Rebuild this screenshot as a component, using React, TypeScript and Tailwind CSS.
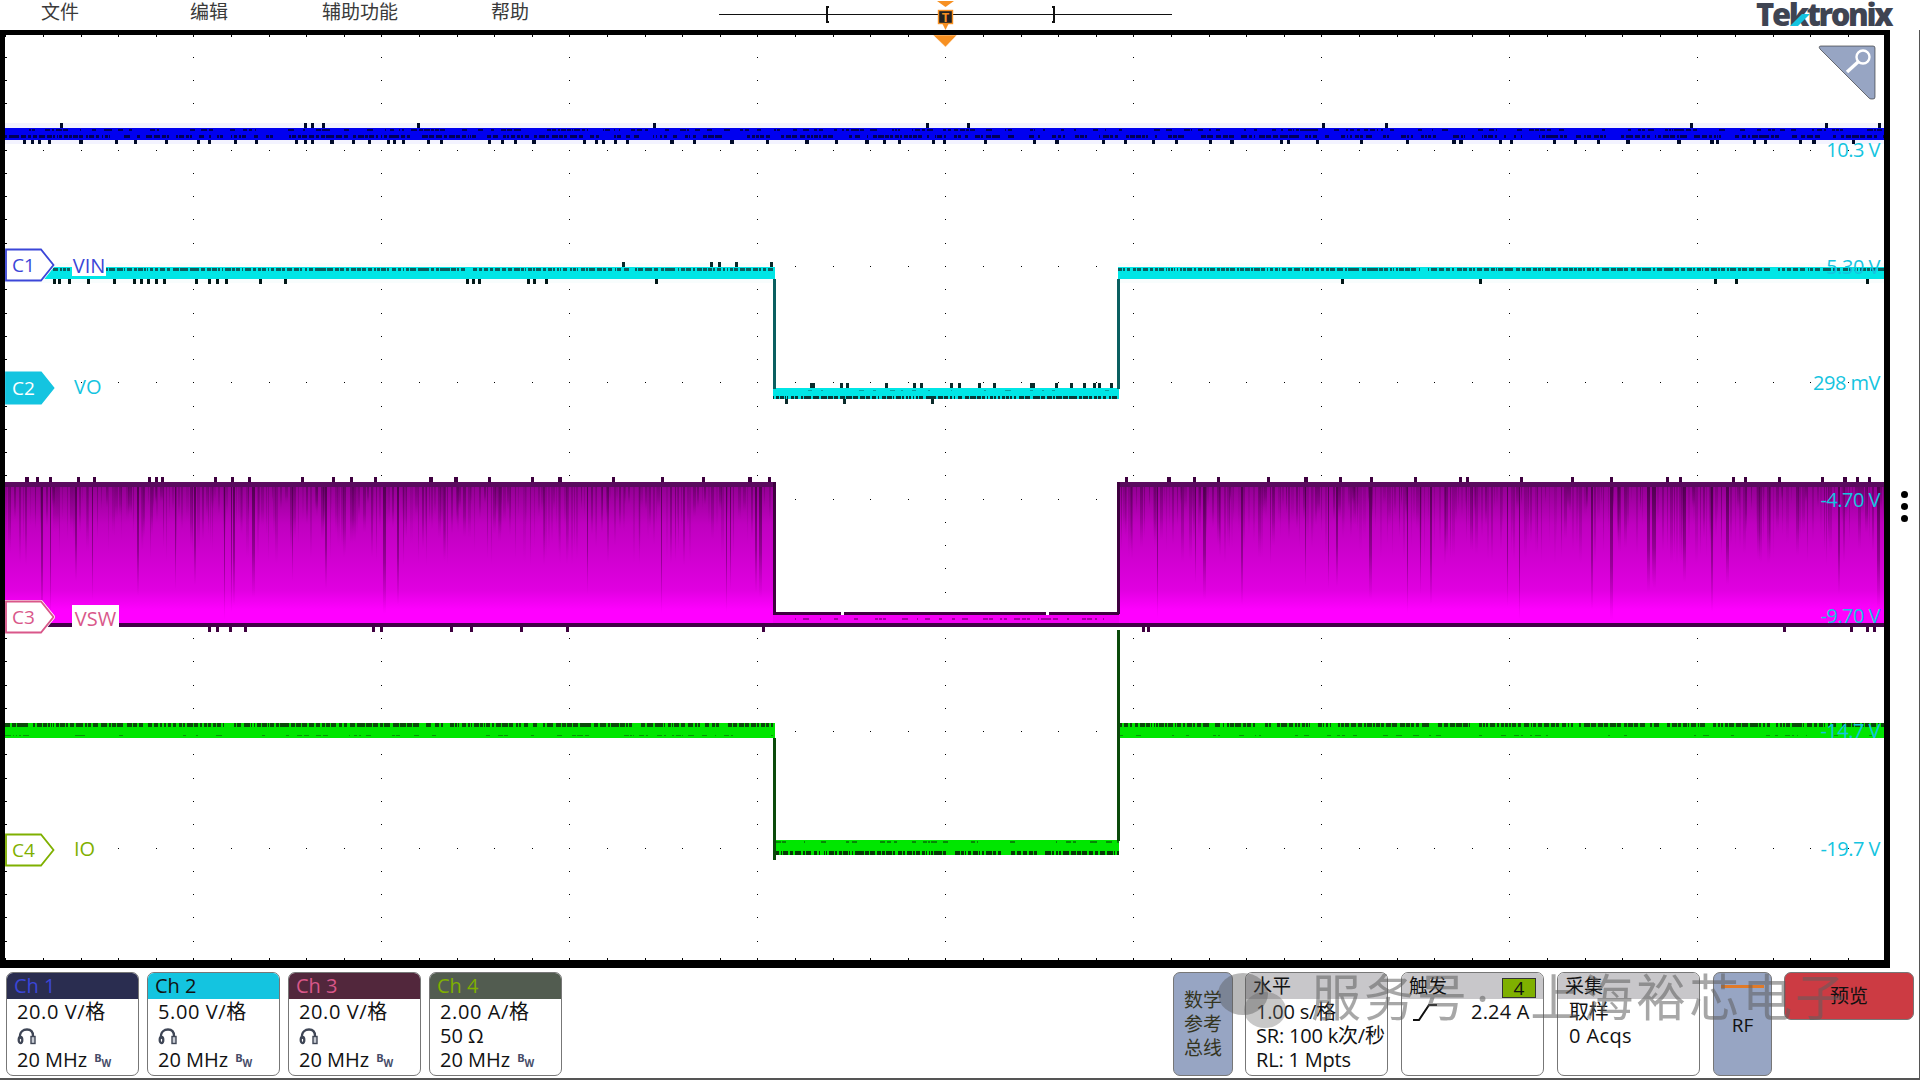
import React from "react";

function rng(seed: number) {
  let a = seed;
  return () => {
    a |= 0;
    a = (a + 0x6d2b79f5) | 0;
    let t = Math.imul(a ^ (a >>> 15), 1 | a);
    t = (t + Math.imul(t ^ (t >>> 7), 61 | t)) ^ t;
    return ((t ^ (t >>> 14)) >>> 0) / 4294967296;
  };
}

type R = { x: number; y: number; w: number; h: number };

function ticks(seed: number, x0: number, x1: number, y: number, h: number, pitch: number): R[] {
  const r = rng(seed);
  const out: R[] = [];
  let x = x0 + r() * pitch;
  while (x < x1) {
    out.push({ x: Math.round(x), y, w: r() > 0.8 ? 4 : 3, h });
    x += pitch * (0.2 + r() * 1.8);
  }
  return out;
}

function at(xs: number[], y: number, h: number, w = 3): R[] {
  return xs.map((x) => ({ x, y, w, h }));
}

function dashes(seed: number, x0: number, x1: number, y: number, h: number, fill: number): R[] {
  const r = rng(seed);
  const out: R[] = [];
  let x = x0;
  while (x < x1) {
    const w = 1 + r() * 5;
    if (r() < fill) out.push({ x: Math.round(x), y, w: Math.min(Math.round(w), x1 - Math.round(x)), h });
    x += w + 0.5 + r() * 2;
  }
  return out;
}

function Rs({ items, fill, opacity }: { items: R[]; fill: string; opacity?: number }) {
  return (
    <g fill={fill} opacity={opacity} shapeRendering="crispEdges">
      {items.map((d, i) => (
        <rect key={i} x={d.x} y={d.y} width={d.w} height={d.h} />
      ))}
    </g>
  );
}

function Grid() {
  const out: R[] = [];
  for (let i = 0; i <= 10; i++) {
    const x = Math.round(5.3 + 188 * i);
    for (let k = 0; k <= 40; k++) out.push({ x, y: Math.round(33.4 + 23.26 * k), w: 1, h: 1 });
  }
  for (let j = 0; j <= 8; j++) {
    const y = Math.round(33.4 + 116.3 * j);
    for (let k = 0; k <= 50; k++) out.push({ x: Math.round(5.3 + 37.6 * k), y, w: 1, h: 1 });
  }
  for (let k = 0; k <= 50; k++) {
    out.push({ x: Math.round(5.3 + 37.6 * k), y: 35, w: 1, h: 2 });
    out.push({ x: Math.round(5.3 + 37.6 * k), y: 958, w: 1, h: 2 });
  }
  for (let k = 0; k <= 40; k++) out.push({ x: 5, y: Math.round(33.4 + 23.26 * k), w: 2, h: 1 });
  return <Rs items={out} fill="#000" />;
}

function Streaks({ x0, x1, seed }: { x0: number; x1: number; seed: number }) {
  const r = rng(seed);
  const out: { x: number; w: number; h: number; o: number }[] = [];
  for (let x = x0; x < x1; x += 1 + Math.floor(r() * 5)) {
    const big = r() > 0.9;
    out.push({
      x,
      w: r() > 0.6 ? 2 : r() > 0.6 ? 3 : 1,
      h: big ? 95 + r() * 40 : 15 + r() * 65,
      o: big ? 0.9 : 0.15 + r() * 0.45,
    });
  }
  return (
    <g shapeRendering="crispEdges">
      {out.map((s, i) => (
        <rect key={i} x={s.x} y={486} width={s.w} height={s.h} fill="url(#streak)" opacity={s.o} />
      ))}
    </g>
  );
}

function Traces() {
  const teal = "#0b5f60";
  const dark = "#000a2a";
  const darkG = "#0a4a0a";
  const pur = "#3f0040";
  const ci = "#021818";
  return (
    <svg className="absolute inset-0 block" width={1879} height={925} viewBox="5 35 1879 925">
      <defs>
        <linearGradient id="mag" x1="0" y1="0" x2="0" y2="1">
          <stop offset="0" stopColor="#8e008e" />
          <stop offset="0.3" stopColor="#c000c0" />
          <stop offset="0.75" stopColor="#e000e0" />
          <stop offset="0.9" stopColor="#ff00ff" />
          <stop offset="1" stopColor="#ff00ff" />
        </linearGradient>
        <linearGradient id="streak" x1="0" y1="0" x2="0" y2="1">
          <stop offset="0" stopColor="#3a003a" stopOpacity="0.85" />
          <stop offset="0.6" stopColor="#500050" stopOpacity="0.5" />
          <stop offset="1" stopColor="#800080" stopOpacity="0" />
        </linearGradient>
      </defs>

      <Grid />

      {/* Channel 1: blue */}
      <rect x={5} y={123} width={1879} height={21} fill="#f3f3ff" />
      <rect x={5} y={128} width={1879} height={12} fill="#0000f0" shapeRendering="crispEdges" />
      <Rs items={dashes(11, 5, 1884, 129, 2, 0.45)} fill="#000060" />
      <Rs items={dashes(12, 5, 1884, 135, 3, 0.7)} fill="#00005a" />
      <Rs items={at([60, 304, 311, 322, 417, 653, 926, 967, 1322, 1385, 1690, 1825, 1878], 123, 5)} fill={dark} />
      <Rs items={ticks(13, 8, 1884, 140, 4, 26)} fill={dark} />

      {/* Channel 2: cyan */}
      <rect x={5} y={263} width={768} height={20} fill="#f8fdfd" />
      <rect x={1118} y={263} width={766} height={20} fill="#f8fdfd" />
      <rect x={5} y={267} width={770} height={12} fill="#00e6e6" shapeRendering="crispEdges" />
      <rect x={1118} y={267} width={766} height={12} fill="#00e6e6" shapeRendering="crispEdges" />
      <rect x={773} y={388} width={346} height={11} fill="#00e6e6" shapeRendering="crispEdges" />
      <Rs items={dashes(21, 5, 773, 268, 3, 0.97)} fill={teal} />
      <Rs items={dashes(22, 1118, 1884, 268, 3, 0.97)} fill={teal} />
      <Rs items={dashes(23, 773, 1119, 396, 3, 1)} fill="#063a3a" />
      <Rs items={dashes(24, 773, 1119, 390, 1, 0.3)} fill={teal} opacity={0.5} />
      <rect x={773} y={279} width={3} height={110} fill={teal} shapeRendering="crispEdges" />
      <rect x={1117} y={279} width={3} height={110} fill={teal} shapeRendering="crispEdges" />
      <Rs items={at([622, 710, 718, 735, 770], 262, 5)} fill="#0a2a2a" />
      <Rs
        items={at([53, 58, 68, 87, 113, 133, 140, 147, 155, 163, 195, 208, 216, 225, 259, 284, 466, 472, 478, 527, 533, 545, 655, 1341, 1479, 1714, 1735, 1866], 279, 5)}
        fill={ci}
      />
      <Rs items={at([810, 812, 840, 846, 885, 913, 920, 950, 958, 978, 993, 1030, 1032, 1055, 1070, 1083, 1093, 1098, 1110], 383, 5)} fill="#0a2a2a" />
      <Rs items={at([785, 843, 931], 399, 5)} fill="#0a2a2a" />

      {/* Channel 3: magenta */}
      <rect x={5} y={482} width={770} height={143} fill="url(#mag)" shapeRendering="crispEdges" />
      <rect x={1118} y={482} width={766} height={143} fill="url(#mag)" shapeRendering="crispEdges" />
      <Streaks x0={5} x1={775} seed={31} />
      <Streaks x0={1118} x1={1884} seed={32} />
      <rect x={5} y={482} width={770} height={5} fill="#5a0a5e" shapeRendering="crispEdges" />
      <rect x={1118} y={482} width={766} height={5} fill="#5a0a5e" shapeRendering="crispEdges" />
      <rect x={773} y={613} width={346} height={12} fill="#f400f4" shapeRendering="crispEdges" />
      <rect x={773} y={482} width={3} height={132} fill={pur} shapeRendering="crispEdges" />
      <rect x={1117} y={482} width={3} height={132} fill={pur} shapeRendering="crispEdges" />
      <rect x={773} y={612} width={346} height={3} fill={pur} shapeRendering="crispEdges" />
      <rect x={841} y={612} width={3} height={3} fill="#fff" shapeRendering="crispEdges" />
      <rect x={1046} y={612} width={3} height={3} fill="#fff" shapeRendering="crispEdges" />
      <Rs items={dashes(33, 790, 1110, 618, 2, 0.5)} fill="#a000a0" />
      <rect x={5} y={623} width={1879} height={4} fill="#420048" shapeRendering="crispEdges" />
      <Rs items={ticks(34, 8, 770, 477, 5, 28)} fill={pur} />
      <Rs items={ticks(35, 1125, 1884, 477, 5, 28)} fill={pur} />
      <Rs items={at([208, 216, 229, 244, 372, 380, 450, 470, 520, 566, 762], 627, 5)} fill={pur} />
      <Rs items={at([1142, 1147, 1783, 1850, 1866, 1873], 627, 5)} fill={pur} />

      {/* Channel 4: green */}
      <rect x={5} y={723} width={770} height={15} fill="#00e600" shapeRendering="crispEdges" />
      <rect x={1118} y={723} width={766} height={15} fill="#00e600" shapeRendering="crispEdges" />
      <rect x={773} y={840} width={346} height={15} fill="#00e600" shapeRendering="crispEdges" />
      <Rs items={dashes(41, 5, 773, 723, 4, 0.9)} fill={darkG} />
      <Rs items={dashes(42, 1118, 1884, 723, 4, 0.9)} fill={darkG} />
      <Rs items={dashes(43, 5, 773, 735, 1, 0.3)} fill={darkG} opacity={0.5} />
      <Rs items={dashes(44, 1118, 1884, 735, 1, 0.3)} fill={darkG} opacity={0.5} />
      <Rs items={dashes(45, 773, 1119, 851, 4, 0.92)} fill="#063a06" />
      <Rs items={dashes(46, 773, 1119, 841, 2, 0.4)} fill={darkG} opacity={0.6} />
      <rect x={773} y={738} width={3} height={122} fill={darkG} shapeRendering="crispEdges" />
      <rect x={1117} y={630} width={3} height={211} fill={darkG} shapeRendering="crispEdges" />

      {/* Trigger position */}
      <polygon points="933,35 957,35 945.5,47" fill="#f79022" stroke="#fff" strokeWidth={0.5} />

      {/* Zoom corner */}
      <path d="M1821 46 H1873 Q1875 46 1875 48 V97 Q1875 99 1873 99 H1871 Q1870 99 1869 98 L1820 49 Q1818 46 1821 46 Z" fill="#97a5c3" stroke="#222" strokeWidth={0.6} />
      <circle cx={1863} cy={57} r={6.5} fill="none" stroke="#fff" strokeWidth={2.4} />
      <path d="M1858 62 L1847 72" stroke="#fff" strokeWidth={3.4} />
    </svg>
  );
}

function Badge({
  cls,
  label,
  fill,
  stroke,
  text,
}: {
  cls: string;
  label: string;
  fill: string;
  stroke: string;
  text: string;
}) {
  return (
    <div className={"absolute w-[50px] h-[34px] flex items-center " + cls}>
      <svg className="absolute inset-0" width={50} height={34} viewBox="0 0 50 34">
        <polygon points="1,1.5 36,1.5 48.5,17 36,32.5 1,32.5" fill={fill} stroke="#fff" strokeWidth={3.5} strokeLinejoin="round" />
        <polygon points="1,1.5 36,1.5 48.5,17 36,32.5 1,32.5" fill={fill} stroke={stroke} strokeWidth={1.8} />
      </svg>
      <span className="relative ml-[7px] text-[19px] leading-none" style={{ color: text }}>
        {label}
      </span>
    </div>
  );
}

function Readout({ cls, children }: { cls: string; children: React.ReactNode }) {
  return (
    <div className={"absolute right-[4px] text-[20px] leading-[24px] tracking-[-0.5px] text-[#14c4e0] " + cls}>{children}</div>
  );
}

function Probe() {
  return (
    <svg width={21} height={17} viewBox="0 0 21 17" fill="none" stroke="#3f4656" strokeWidth={2.3}>
      <path d="M3 11 C2 3 7 1.5 10 1.5 C14 1.5 16 4 16 8" />
      <ellipse cx={3.5} cy={12} rx={1.8} ry={3} />
      <rect x={14} y={8.5} width={4} height={7} fill="#c8ccd4" strokeWidth={1.4} />
    </svg>
  );
}

function Bw() {
  return (
    <span className="ml-[7px] inline-flex items-start font-bold text-[#454c68] leading-none">
      <span className="text-[11px]">B</span>
      <span className="text-[10px] mt-[6px]">W</span>
    </span>
  );
}

function ChannelPanel({
  title,
  head,
  headText,
  v,
  second,
}: {
  title: string;
  head: string;
  headText: string;
  v: string;
  second: React.ReactNode;
}) {
  return (
    <div className="w-[133px] h-[104px] rounded-[7px] border border-[#777777] bg-white overflow-hidden flex flex-col shrink-0">
      <div className="h-[26px] pl-[7px] flex items-center text-[20px] leading-none" style={{ background: head, color: headText }}>
        {title}
      </div>
      <div className="h-[24px] mt-px pl-[10px] flex items-center text-[20px] tracking-[0.6px] text-[#111]">{v}</div>
      <div className="h-[24px] pl-[10px] flex items-center text-[20px] text-[#111]">{second}</div>
      <div className="h-[24px] pl-[10px] flex items-center text-[20px] text-[#111]">
        20 MHz
        <Bw />
      </div>
    </div>
  );
}

function InfoPanel({
  cls,
  title,
  badge,
  rows,
}: {
  cls?: string;
  title: string;
  badge?: string;
  rows: React.ReactNode[];
}) {
  return (
    <div className={"w-[143px] h-[104px] rounded-[7px] border border-[#777777] bg-white overflow-hidden flex flex-col shrink-0 " + (cls ?? "")}>
      <div className="h-[26px] pl-[7px] pr-[7px] flex items-center justify-between bg-[#c8c7ca] text-[19px] leading-none text-[#111]">
        <span>{title}</span>
        {badge && (
          <span className="w-[34px] h-[20px] mt-[4px] border border-[#333] bg-[#7fb000] flex items-center justify-center text-[19px]">
            {badge}
          </span>
        )}
      </div>
      <div className="pt-px flex flex-col">
        {rows.map((r, i) => (
          <div key={i} className="h-[24px] pl-[10px] flex items-center text-[20px] tracking-[-0.2px] text-[#111] whitespace-nowrap">
            {r}
          </div>
        ))}
      </div>
    </div>
  );
}

export default function App() {
  return (
    <div className="relative w-[1920px] h-[1080px] overflow-hidden bg-white flex flex-col font-['Open_Sans','Noto_Sans_CJK_SC',sans-serif]">
      {/* Top bar */}
      <div className="h-[30px] flex items-center shrink-0 relative text-[19px] leading-none text-[#3a3a3a]">
        <span className="ml-[41px] mb-[5px]">文件</span>
        <span className="ml-[111px] mb-[5px]">编辑</span>
        <span className="ml-[94px] mb-[5px]">辅助功能</span>
        <span className="ml-[93px] mb-[5px]">帮助</span>
        <svg className="ml-[190px] shrink-0" width={453} height={30} viewBox="719 0 453 30">
          <path d="M719 14.5 H1172" stroke="#111" strokeWidth={1} shapeRendering="crispEdges" />
          <path d="M829 7 H827 V22 H829 M1052 7 H1054 V22 H1052" fill="none" stroke="#111" strokeWidth={1.8} shapeRendering="crispEdges" />
          <polygon points="937,1 954,1 945.5,7" fill="#f79022" />
          <polygon points="942,23 949,23 945.5,30" fill="#f79022" />
          <rect x={938.5} y={10.5} width={14} height={13} fill="#222" stroke="#f79022" strokeWidth={1.4} />
          <text x={945.5} y={21.5} textAnchor="middle" fontSize={13} fontWeight={700} fill="#f79022">T</text>
        </svg>
        <div className="ml-auto mr-[28px] relative h-[30px] w-[136px]">
          <span className="absolute left-0 top-0 text-[31px] leading-[28px] font-extrabold tracking-[-2.4px] text-[#3f4452] whitespace-nowrap">
            Tektronix
          </span>
          <svg className="absolute left-0 top-0" width={136} height={30} viewBox="1756 0 136 30">
            <polygon points="1802,14 1810,14 1798,26 1790,26" fill="#14c4e0" />
          </svg>
        </div>
      </div>

      {/* Middle */}
      <div className="h-[938px] flex shrink-0">
        <div className="relative w-[1890px] h-[938px] shrink-0 border-t-[5px] border-l-[5px] border-r-[6px] border-b-[8px] border-black bg-white">
          <Traces />
          <Badge cls="left-0 top-[213px]" label="C1" fill="#ffffff" stroke="#3b46d8" text="#3b46d8" />
          <div className="absolute left-[67px] top-[220px] w-[34px] h-[21px] bg-white flex items-center justify-center text-[20px] text-[#3b46d8]">VIN</div>
          <Badge cls="left-0 top-[336px]" label="C2" fill="#14c4e0" stroke="#14c4e0" text="#ffffff" />
          <div className="absolute left-[69px] top-[340px] text-[20px] leading-[24px] text-[#14c4e0]">VO</div>
          <Badge cls="left-0 top-[565px]" label="C3" fill="#ffffff" stroke="#d9578a" text="#d9578a" />
          <div className="absolute left-[67px] top-[570px] w-[47px] h-[27px] bg-white flex items-center justify-center text-[20px] text-[#d9578a]">VSW</div>
          <Badge cls="left-0 top-[798px]" label="C4" fill="#ffffff" stroke="#7fb000" text="#7fb000" />
          <div className="absolute left-[69px] top-[802px] text-[20px] leading-[24px] text-[#7fb000]">IO</div>

          <Readout cls="top-[103px]">10.3 V</Readout>
          <Readout cls="top-[220px]">5.30 V</Readout>
          <Readout cls="top-[336px]">298 mV</Readout>
          <Readout cls="top-[453px]">-4.70 V</Readout>
          <Readout cls="top-[569px]">-9.70 V</Readout>
          <Readout cls="top-[684px]">-14.7 V</Readout>
          <Readout cls="top-[802px]">-19.7 V</Readout>
        </div>
        <div className="flex-1 flex flex-col items-center pt-[461px] gap-[5px] border-r border-[#555555]">
          <div className="w-[7px] h-[7px] rounded-full bg-black" />
          <div className="w-[7px] h-[7px] rounded-full bg-black" />
          <div className="w-[7px] h-[7px] rounded-full bg-black" />
        </div>
      </div>

      {/* Bottom */}
      <div className="flex-1 flex items-start pt-[4px] pl-[6px] border-b-2 border-r border-[#555555]">
        <div className="flex gap-[8px]">
          <ChannelPanel title="Ch 1" head="#2a2d50" headText="#3b46d8" v="20.0 V/格" second={<Probe />} />
          <ChannelPanel title="Ch 2" head="#14c4e0" headText="#111111" v="5.00 V/格" second={<Probe />} />
          <ChannelPanel title="Ch 3" head="#52273c" headText="#d9578a" v="20.0 V/格" second={<Probe />} />
          <ChannelPanel title="Ch 4" head="#525c50" headText="#7fb000" v="2.00 A/格" second="50 Ω" />
        </div>
        <div className="ml-[611px] w-[60px] h-[104px] rounded-[7px] border border-[#777777] bg-[#97a5c3] flex flex-col items-center justify-center text-[19px] leading-[24px] text-[#35351f] shrink-0">
          <span>数学</span>
          <span>参考</span>
          <span>总线</span>
        </div>
        <InfoPanel cls="ml-[12px]" title="水平" rows={["1.00 s/格", "SR: 100 k次/秒", "RL: 1 Mpts"]} />
        <InfoPanel
          cls="ml-[13px]"
          title="触发"
          badge="4"
          rows={[
            <span key="t" className="flex items-center tracking-[0.2px]">
              <svg width={26} height={20} viewBox="0 0 26 20" fill="none" stroke="#111" strokeWidth={2} className="mr-[33px]">
                <path d="M1 18 H7 L17 3 H25" />
              </svg>
              2.24 A
            </span>,
          ]}
        />
        <InfoPanel
          cls="ml-[13px]"
          title="采集"
          rows={[
            <span key="a" className="ml-[1px]">取样</span>,
            <span key="b" className="ml-[1px] tracking-[0.4px]">0 Acqs</span>,
          ]}
        />
        <div className="relative ml-[13px] w-[59px] h-[104px] rounded-[7px] border border-[#777777] bg-[#97a5c3] flex items-center justify-center text-[19px] leading-none pt-[2px] text-[#111] shrink-0">
          <div className="absolute left-[7px] top-[12px] w-[43px] h-[3px] bg-[#e07a28]" />
          RF
        </div>
        <div className="ml-[12px] w-[130px] h-[48px] rounded-[7px] border border-[#777777] bg-[#cc3b43] flex items-center justify-center text-[19px] text-[#111] shrink-0">
          预览
        </div>
      </div>

      {/* Watermark */}
      <svg className="absolute left-[1215px] top-[970px] pointer-events-none" width={85} height={62} viewBox="0 0 85 62">
        <ellipse cx={28} cy={24} rx={25} ry={21} fill="#555" opacity={0.42} />
        <ellipse cx={50} cy={40} rx={21} ry={18} fill="#666" opacity={0.36} />
      </svg>
      <div className="absolute left-[1311px] top-[966px] text-[50px] leading-[62px] tracking-[3px] text-[#5f5f5f]/55 whitespace-nowrap pointer-events-none">
        服务号<span className="mx-[6px]">·</span><span className="ml-[32px]">上海裕芯电子</span>
      </div>
    </div>
  );
}
